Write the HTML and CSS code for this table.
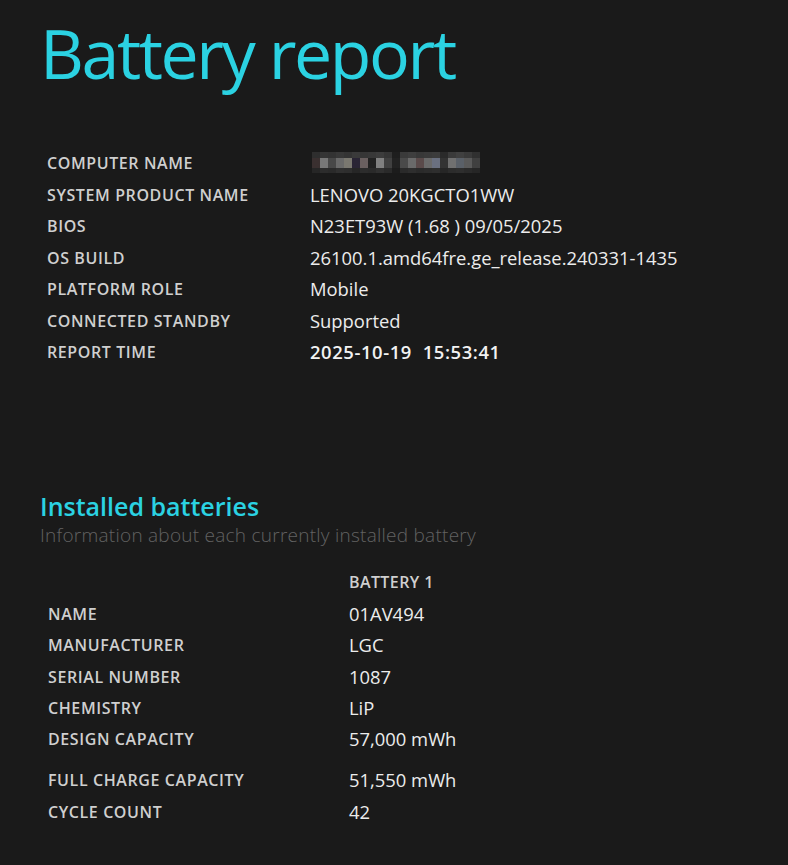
FILE: index.html
```html
<!DOCTYPE html>
<html lang="en">
<head>
<meta charset="utf-8">
<title>Battery report</title>
<link rel="stylesheet" href="styles.css">
</head>
<body>
<main class="report">
  <h1 class="title">Battery report</h1>

  <div class="info">
    <div class="label">COMPUTER NAME</div>
    <div class="value">
      <div class="mosaic" aria-label="hidden computer name">
        <span style="background:#2e2e2e"></span><span style="background:#353535"></span><span style="background:#333"></span><span style="background:#383838"></span><span style="background:#343434"></span><span style="background:#3a3a3a"></span><span style="background:#363636"></span><span style="background:#383838"></span><span style="background:#3c3c3c"></span><span style="background:#353535"></span><span style="background:#1e1e1e"></span><span style="background:#3a3a3a"></span><span style="background:#3e3e3e"></span><span style="background:#383838"></span><span style="background:#3a3a3a"></span><span style="background:#3c3c3c"></span><span style="background:#2a2a2a"></span><span style="background:#3a3a3a"></span><span style="background:#404040"></span><span style="background:#3a3a3a"></span><span style="background:#303030"></span>
        <span style="background:#3a3030"></span><span style="background:#787878"></span><span style="background:#484848"></span><span style="background:#6a6a6a"></span><span style="background:#7a7870"></span><span style="background:#2a2535"></span><span style="background:#6a6060"></span><span style="background:#222"></span><span style="background:#808080"></span><span style="background:#404040"></span><span style="background:#222"></span><span style="background:#4a4a4a"></span><span style="background:#6a6a6a"></span><span style="background:#5a4a4a"></span><span style="background:#6a6a6a"></span><span style="background:#6a7080"></span><span style="background:#333"></span><span style="background:#707070"></span><span style="background:#5a6068"></span><span style="background:#5a5a5a"></span><span style="background:#404040"></span>
        <span style="background:#262626"></span><span style="background:#2c2c2c"></span><span style="background:#2a2a2a"></span><span style="background:#303030"></span><span style="background:#2e2e2e"></span><span style="background:#262626"></span><span style="background:#2c2c2c"></span><span style="background:#2a2a2a"></span><span style="background:#303030"></span><span style="background:#2a2a2a"></span><span style="background:#1c1c1c"></span><span style="background:#2a2a2a"></span><span style="background:#2e2e2e"></span><span style="background:#2a2a2a"></span><span style="background:#2c2c2c"></span><span style="background:#2e2e2e"></span><span style="background:#262626"></span><span style="background:#2c2c2c"></span><span style="background:#2e2e2e"></span><span style="background:#2a2a2a"></span><span style="background:#262626"></span>
      </div>
    </div>
    <div class="label">SYSTEM PRODUCT NAME</div>
    <div class="value">LENOVO 20KGCTO1WW</div>
    <div class="label">BIOS</div>
    <div class="value">N23ET93W (1.68 ) 09/05/2025</div>
    <div class="label">OS BUILD</div>
    <div class="value">26100.1.amd64fre.ge_release.240331-1435</div>
    <div class="label">PLATFORM ROLE</div>
    <div class="value">Mobile</div>
    <div class="label">CONNECTED STANDBY</div>
    <div class="value">Supported</div>
    <div class="label">REPORT TIME</div>
    <div class="value strong">2025-10-19&nbsp;&nbsp;15:53:41</div>
  </div>

  <h2 class="section-title">Installed batteries</h2>
  <p class="section-sub">Information about each currently installed battery</p>

  <div class="battery">
    <div class="label"></div>
    <div class="col-head">BATTERY 1</div>
    <div class="label">NAME</div>
    <div class="value">01AV494</div>
    <div class="label">MANUFACTURER</div>
    <div class="value">LGC</div>
    <div class="label">SERIAL NUMBER</div>
    <div class="value">1087</div>
    <div class="label">CHEMISTRY</div>
    <div class="value">LiP</div>
    <div class="label">DESIGN CAPACITY</div>
    <div class="value">57,000 mWh</div>
    <div class="spacer"></div>
    <div class="label">FULL CHARGE CAPACITY</div>
    <div class="value">51,550 mWh</div>
    <div class="label">CYCLE COUNT</div>
    <div class="value">42</div>
  </div>
</main>
</body>
</html>
```

FILE: styles.css
```css
html, body {
  margin: 0;
  padding: 0;
  background: #1a1a1a;
}

body {
  font-family: "Open Sans", "Noto Sans", sans-serif;
  color: #ededed;
}

.report {
  padding: 19px 0 0 40px;
}

.title {
  margin: 0;
  font-size: 68px;
  line-height: 68px;
  font-weight: 400;
  color: #2bd2e2;
  letter-spacing: -2.4px;
}

.info {
  display: grid;
  grid-template-columns: 263px auto;
  grid-auto-rows: 31.5px;
  align-items: center;
  margin: 60px 0 0 7px;
}

.label {
  font-size: 16px;
  font-weight: 600;
  color: #cfcfcf;
  letter-spacing: 0.6px;
  padding-top: 1px;
}

.value {
  font-size: 18.4px;
  font-weight: 400;
  color: #ececec;
}

.value.strong {
  font-weight: 600;
  color: #f2f2f2;
  letter-spacing: 0.6px;
}

.mosaic {
  display: grid;
  grid-template-columns: repeat(21, 8px);
  grid-template-rows: 6px 10px 5px;
  width: 168px;
  margin-left: 2px;
}

.mosaic span {
  display: block;
}

.section-title {
  margin: 121px 0 0 0;
  font-size: 25px;
  line-height: 34px;
  font-weight: 600;
  color: #2bd2e2;
}

.section-sub {
  margin: 0;
  font-size: 19px;
  line-height: 24px;
  font-weight: 300;
  color: #626262;
  letter-spacing: 0.25px;
}

.battery {
  display: grid;
  grid-template-columns: 301px auto;
  grid-template-rows: repeat(6, 31.3px) 10px repeat(2, 31.3px);
  align-items: center;
  margin: 20px 0 0 8px;
}

.col-head {
  font-size: 16px;
  font-weight: 600;
  color: #cfcfcf;
  letter-spacing: 0.4px;
}

.battery .spacer {
  grid-column: 1 / -1;
  height: 10px;
}
```
